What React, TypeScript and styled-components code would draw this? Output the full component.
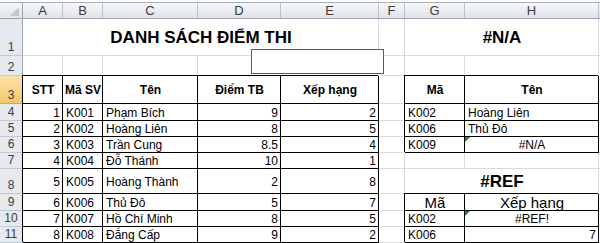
import React from 'react';
import styled, { createGlobalStyle, css } from 'styled-components';

const GlobalStyle = createGlobalStyle`
  html, body {
    margin: 0;
    padding: 0;
    background: #fff;
  }
  body {
    font-family: 'Liberation Sans', Arial, sans-serif;
    overflow: hidden;
  }
`;

type Align = 'left' | 'center' | 'right';

interface CellSpec {
  text?: string;
  span?: number;
  align?: Align;
  boxed?: boolean;
  bold?: boolean;
  size?: number;
  flag?: boolean;
}

interface RowSpec {
  label: string;
  selected?: boolean;
  cells: CellSpec[];
}

const Frame = styled.div`
  position: relative;
  width: 600px;
  height: 243px;
  overflow: hidden;
  background: #fff;
`;

const TopStrip = styled.div`
  height: 2px;
  border-bottom: 1px solid #a9b0b9;
`;

const Sheet = styled.div`
  display: grid;
  grid-template-columns: 23px 40px 40px 95px 83px 98px 26px 60px 134px 1fr;
  grid-template-rows: 16px 37px 20px 28px 17px 16px 16px 16px 25px 17px 16px 16px;
`;

const headBase = css`
  box-sizing: border-box;
  display: flex;
  justify-content: center;
  color: #3c3c3c;
  font-size: 13px;
  line-height: 1;
`;

const Corner = styled.div`
  ${headBase};
  position: relative;
  background: linear-gradient(#f5f6f8, #e2e5e9);
  border-right: 1px solid #9ea5ae;
  border-bottom: 1px solid #9ea5ae;

  &::after {
    content: '';
    position: absolute;
    right: 3px;
    bottom: 2px;
    border-left: 9px solid transparent;
    border-bottom: 9px solid #c3c8cf;
  }
`;

const ColHead = styled.div`
  ${headBase};
  align-items: center;
  background: linear-gradient(#f6f7f9, #e0e3e8);
  border-right: 1px solid #bcc2ca;
  border-bottom: 1px solid #9ea5ae;
`;

const RowHead = styled.div<{ $selected?: boolean }>`
  ${headBase};
  align-items: flex-end;
  padding-bottom: 2px;
  font-size: 12px;
  background: ${(p) => (p.$selected ? 'linear-gradient(#fbe2a8, #f4c867)' : '#e6e9ed')};
  border-right: 1px solid ${(p) => (p.$selected ? '#e2a53c' : '#9ea5ae')};
  border-bottom: 1px solid ${(p) => (p.$selected ? '#e2a53c' : '#c3c9d0')};
`;

const justify: Record<Align, string> = {
  left: 'flex-start',
  center: 'center',
  right: 'flex-end',
};

const Cell = styled.div<{
  $span: number;
  $align: Align;
  $boxed?: boolean;
  $bold?: boolean;
  $size: number;
  $flag?: boolean;
}>`
  box-sizing: border-box;
  position: relative;
  grid-column: span ${(p) => p.$span};
  display: flex;
  align-items: center;
  justify-content: ${(p) => justify[p.$align]};
  padding: 1px 2px 0 3px;
  color: #000;
  font-size: ${(p) => p.$size}px;
  font-weight: ${(p) => (p.$bold ? 700 : 400)};
  white-space: nowrap;
  border-right: 1px solid ${(p) => (p.$boxed ? '#000' : '#d9dadb')};
  border-bottom: 1px solid ${(p) => (p.$boxed ? '#000' : '#d9dadb')};
  box-shadow: ${(p) => (p.$boxed ? '-1px -1px 0 #000' : 'none')};

  &::before {
    content: '';
    display: ${(p) => (p.$flag ? 'block' : 'none')};
    position: absolute;
    left: 0;
    top: 0;
    border-top: 5px solid #1e8a1e;
    border-right: 5px solid transparent;
  }
`;

const Callout = styled.div`
  position: absolute;
  left: 251px;
  top: 49px;
  width: 133px;
  height: 25px;
  box-sizing: border-box;
  background: #fff;
  border: 1px solid #d42626;
`;

const head = (text: string): CellSpec => ({ text, align: 'center', bold: true, boxed: true });
const box = (text: string, align: Align = 'left'): CellSpec => ({ text, align, boxed: true });
const title = (text: string, span: number): CellSpec => ({ text, span, align: 'center', bold: true, size: 17 });
const empty = (n: number): CellSpec[] => Array.from({ length: n }, () => ({}));

const students = [
  ['1', 'K001', 'Phạm Bích', '9', '2'],
  ['2', 'K002', 'Hoàng Liên', '8', '5'],
  ['3', 'K003', 'Trần Cung', '8.5', '4'],
  ['4', 'K004', 'Đỗ Thánh', '10', '1'],
  ['5', 'K005', 'Hoàng Thành', '2', '8'],
  ['6', 'K006', 'Thủ Đô', '5', '7'],
  ['7', 'K007', 'Hồ Chí Minh', '8', '5'],
  ['8', 'K008', 'Đắng Cấp', '9', '2'],
];

const sideCells: CellSpec[][] = [
  [box('K002'), box('Hoàng Liên')],
  [box('K006'), box('Thủ Đô')],
  [box('K009'), { ...box('#N/A', 'center'), flag: true }],
  empty(2),
  [title('#REF', 2)],
  [
    { text: 'Mã', align: 'center', boxed: true, size: 15 },
    { text: 'Xếp hạng', align: 'center', boxed: true, size: 15 },
  ],
  [box('K002'), { ...box('#REF!', 'center'), flag: true }],
  [box('K006'), box('7', 'right')],
];

const rows: RowSpec[] = [
  { label: '1', cells: [title('DANH SÁCH ĐIỂM THI', 5), {}, title('#N/A', 2), {}] },
  { label: '2', cells: empty(9) },
  {
    label: '3',
    selected: true,
    cells: [
      head('STT'),
      head('Mã SV'),
      head('Tên'),
      head('Điểm TB'),
      head('Xếp hạng'),
      {},
      head('Mã'),
      head('Tên'),
      {},
    ],
  },
  ...students.map((s, i) => ({
    label: String(i + 4),
    cells: [
      box(s[0], 'right'),
      box(s[1]),
      box(s[2]),
      box(s[3], 'right'),
      box(s[4], 'right'),
      {},
      ...sideCells[i],
      {},
    ],
  })),
];

const columns = ['A', 'B', 'C', 'D', 'E', 'F', 'G', 'H', ''];

const App = () => {
  return (
    <Frame>
      <GlobalStyle />
      <TopStrip />
      <Sheet>
        <Corner />
        {columns.map((c, i) => (
          <ColHead key={i}>{c}</ColHead>
        ))}
        {rows.map((row) => (
          <React.Fragment key={row.label}>
            <RowHead $selected={row.selected}>{row.label}</RowHead>
            {row.cells.map((cell, j) => (
              <Cell
                key={j}
                $span={cell.span ?? 1}
                $align={cell.align ?? 'left'}
                $boxed={cell.boxed}
                $bold={cell.bold}
                $size={cell.size ?? 12}
                $flag={cell.flag}
              >
                {cell.text}
              </Cell>
            ))}
          </React.Fragment>
        ))}
      </Sheet>
      <Callout />
    </Frame>
  );
};

export default App;
